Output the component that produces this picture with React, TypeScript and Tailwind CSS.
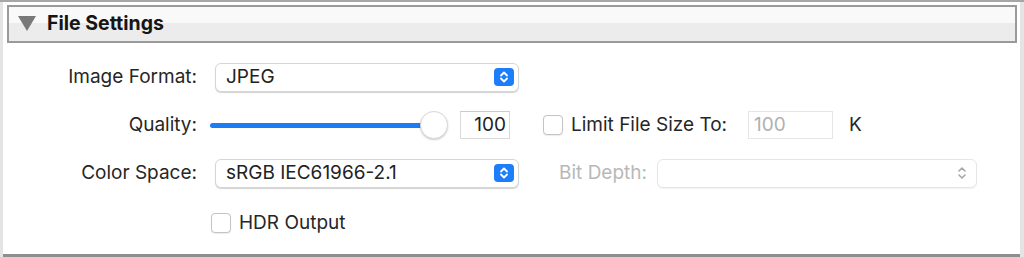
import React from "react";

const font = { fontFamily: "Inter, 'Noto Sans', sans-serif" };

function Stepper({ disabled }: { disabled?: boolean }) {
  if (disabled) {
    return (
      <svg width="10" height="16" viewBox="0 0 10 16" className="text-[#a8a8a8]">
        <path d="M2 6 L5 3 L8 6 M2 10 L5 13 L8 10" fill="none" stroke="currentColor" strokeWidth="1.6" strokeLinecap="round" strokeLinejoin="round" />
      </svg>
    );
  }
  return (
    <span className="grid h-[18px] w-[20px] place-items-center rounded-[4px] bg-[#1c7ef9]">
      <svg width="10" height="14" viewBox="0 0 10 14">
        <path d="M2 5.5 L5 2.5 L8 5.5 M2 8.5 L5 11.5 L8 8.5" fill="none" stroke="white" strokeWidth="1.8" strokeLinecap="round" strokeLinejoin="round" />
      </svg>
    </span>
  );
}

function Popup({ value, width, disabled }: { value: string; width: string; disabled?: boolean }) {
  return (
    <div
      className={`flex h-[29px] items-center justify-between rounded-[6px] border bg-white pl-[10px] pr-[4px] ${width} ${
        disabled ? "border-[#e6e6e6] shadow-[0_1px_1px_rgba(0,0,0,0.05)] pr-[9px]" : "border-[#d6d6d6] shadow-[0_1px_1px_rgba(0,0,0,0.18)]"
      }`}
    >
      <span className="text-[19px] text-[#222]">{value}</span>
      <Stepper disabled={disabled} />
    </div>
  );
}

function Checkbox() {
  return <span className="block size-[20px] shrink-0 rounded-[4px] border border-[#c4c4c4] bg-white shadow-[0_0.5px_1px_rgba(0,0,0,0.08)]" />;
}

function Label({ children }: { children: React.ReactNode }) {
  return <span className="w-[194px] shrink-0 text-right text-[19px] text-[#262626]">{children}</span>;
}

export default function App() {
  return (
    <div className="h-[257px] w-[1024px] overflow-hidden border-t-2 border-[#a6a6a6] bg-white" style={font}>
      <div className="flex h-full">
        <div className="w-[3px] shrink-0 bg-[#e4e4e4]" />
        <div className="flex flex-1 flex-col border-b-[3px] border-[#8e8e8e]">
          <div className="ml-[4px] mr-[3px] mt-[3px] h-[38px] border-2 border-[#9a9a9a] shadow-[inset_0_0_0_1px_#ffffff]">
            <div className="flex h-full items-center bg-[linear-gradient(#f9f9f9_0%,#f9f9f9_48%,#ececec_48%,#ececec_100%)] pl-[9px]">
              <svg width="19" height="16" viewBox="0 0 19 16">
                <path d="M0 0 H18 L9 15 Z" fill="#797979" />
              </svg>
              <span className="ml-[10px] text-[19.5px] font-bold text-[#151515]">File Settings</span>
            </div>
          </div>

          <div className="mt-[10px] flex h-[48px] items-center">
            <Label>Image Format:</Label>
            <div className="ml-[18px]">
              <Popup value="JPEG" width="w-[304px]" />
            </div>
          </div>

          <div className="flex h-[48px] items-center">
            <Label>Quality:</Label>
            <div className="relative ml-[13px] flex h-[28px] w-[238px] items-center">
              <div className="h-[5px] w-[222px] rounded-full bg-[#1c7cf4]" />
              <span className="absolute right-0 top-0 size-[28px] rounded-full border border-[#d9d9d9] bg-white shadow-[0_1px_2px_rgba(0,0,0,0.2)]" />
            </div>
            <div className="ml-[12px] flex h-[28px] w-[50px] items-center justify-end border border-[#dadada] border-t-[#cacaca] pr-[3px] text-[19px] text-[#222]">
              100
            </div>
            <div className="ml-[33px]">
              <Checkbox />
            </div>
            <span className="ml-[8px] w-[177px] shrink-0 text-[19px] text-[#262626]">Limit File Size To:</span>
            <div className="flex h-[28px] w-[85px] items-center border border-[#e6e6e6] pl-[5px] text-[19px] text-[#b0b0b0]">100</div>
            <span className="ml-[16px] text-[19px] text-[#262626]">K</span>
          </div>

          <div className="flex h-[48px] items-center">
            <Label>Color Space:</Label>
            <div className="ml-[18px]">
              <Popup value="sRGB IEC61966-2.1" width="w-[304px]" />
            </div>
            <span className="ml-[10px] w-[128px] shrink-0 pr-[10px] text-right text-[19px] text-[#b8b8b8]">Bit Depth:</span>
            <Popup value="" width="w-[320px]" disabled />
          </div>

          <div className="mt-[2px] flex h-[48px] items-center">
            <span className="w-[194px] shrink-0" />
            <div className="ml-[14px]">
              <Checkbox />
            </div>
            <span className="ml-[8px] text-[19px] text-[#262626]">HDR Output</span>
          </div>
        </div>
        <div className="w-[4px] shrink-0 bg-[#e4e4e4]" />
      </div>
    </div>
  );
}
